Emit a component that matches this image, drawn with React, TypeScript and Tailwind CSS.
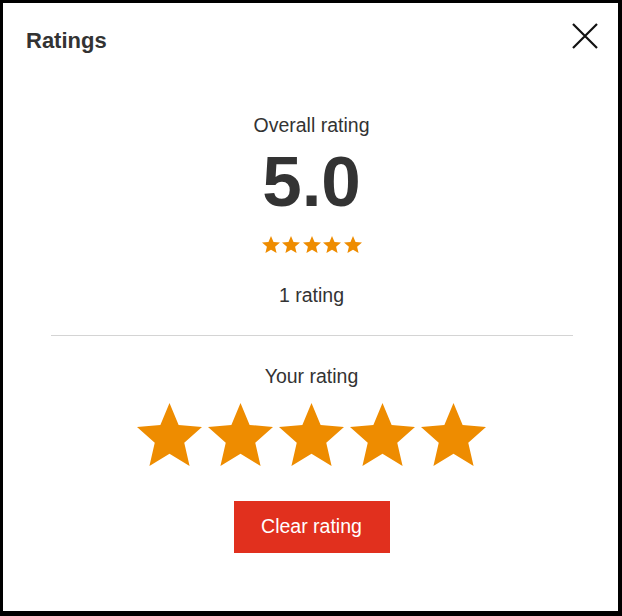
import React from "react";

const STAR = "12,17.27 18.18,21 16.54,13.97 22,9.24 14.81,8.62 12,2 9.19,8.62 2,9.24 7.46,13.97 5.82,21";

function Star({ className }: { className: string }) {
  return (
    <svg viewBox="2 2 20 19" className={className} preserveAspectRatio="none">
      <polygon points={STAR} fill="#EE8C00" />
    </svg>
  );
}

export default function App() {
  return (
    <div className="w-[622px] h-[616px] bg-black pt-[3px] pl-[3px] font-['Liberation_Sans',Arial,sans-serif] text-[#333]">
      <div className="w-[615px] h-[608px] bg-white flex flex-col">
        {/* Header */}
        <div className="flex justify-between items-start pt-[20px] pl-[23px] pr-[20px]">
          <h2 className="mt-[7px] text-[22px] leading-none font-bold">Ratings</h2>
          <button aria-label="Close" className="w-[26px] h-[26px]">
            <svg viewBox="0 0 26 26" className="w-[26px] h-[26px]">
              <path d="M1 1 L25 25 M25 1 L1 25" stroke="#111" strokeWidth="2.2" fill="none" />
            </svg>
          </button>
        </div>

        {/* Body */}
        <div className="flex flex-col items-center pl-[2px]">
          <p className="mt-[63.5px] text-[19.5px] leading-none">Overall rating</p>
          <p className="mt-[10.5px] text-[71px] leading-none font-bold">5.0</p>
          <div className="mt-[19px] flex gap-[2.5px]">
            {[0, 1, 2, 3, 4].map((i) => (
              <Star key={i} className="w-[18px] h-[17px]" />
            ))}
          </div>
          <p className="mt-[33px] text-[19.5px] leading-none">1 rating</p>
          <div className="mt-[30px] w-[522px] h-px bg-[#d4d4d4]" />
          <p className="mt-[31px] text-[19.5px] leading-none">Your rating</p>
          <div className="mt-[16.5px] flex gap-[6px]">
            {[0, 1, 2, 3, 4].map((i) => (
              <Star key={i} className="w-[65px] h-[63px]" />
            ))}
          </div>
          <button className="mt-[35px] w-[156px] h-[52px] bg-[#E1301E] text-white text-[19.5px] leading-none flex items-center justify-center">
            Clear rating
          </button>
        </div>
      </div>
    </div>
  );
}
